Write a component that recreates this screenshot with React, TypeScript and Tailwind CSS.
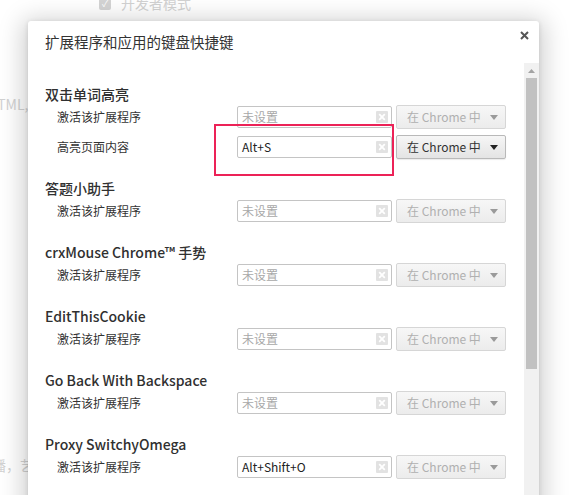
import React from "react";

type Row = { label: string; value?: string; active?: boolean };
type Section = { name: string; rows: Row[] };

const sections: Section[] = [
  {
    name: "双击单词高亮",
    rows: [
      { label: "激活该扩展程序" },
      { label: "高亮页面内容", value: "Alt+S", active: true },
    ],
  },
  { name: "答题小助手", rows: [{ label: "激活该扩展程序" }] },
  { name: "crxMouse Chrome™ 手势", rows: [{ label: "激活该扩展程序" }] },
  { name: "EditThisCookie", rows: [{ label: "激活该扩展程序" }] },
  { name: "Go Back With Backspace", rows: [{ label: "激活该扩展程序" }] },
  { name: "Proxy SwitchyOmega", rows: [{ label: "激活该扩展程序", value: "Alt+Shift+O" }] },
];

// little grey square with a white cross, inside the shortcut box
function ClearIcon() {
  return (
    <svg width="12" height="12" viewBox="0 0 12 12" className="shrink-0">
      <rect x="0" y="0" width="12" height="12" rx="1" fill="#e2e2e2" />
      <path d="M3.2 3.2 L8.8 8.8 M8.8 3.2 L3.2 8.8" stroke="#fff" strokeWidth="1.8" />
    </svg>
  );
}

function ShortcutRow({ label, value, active }: Row) {
  return (
    <div className="flex h-[30px] items-center pl-3">
      <div className="w-[180px] text-[12px] text-[#333]">{label}</div>
      <div className="flex h-[22px] w-[155px] items-center rounded-[2px] border border-[#c4c4c4] bg-white pl-[4px] pr-[3px]">
        <span className={"flex-1 text-[12px] leading-none " + (value ? "text-[#222]" : "text-[#a8a8a8]")}>
          {value ?? "未设置"}
        </span>
        <ClearIcon />
      </div>
      <div
        className={
          "ml-[4px] flex h-[24px] w-[110px] items-center rounded-[2px] border pl-[10px] pr-[7px] " +
          (active
            ? "border-[#b9b9b9] bg-gradient-to-b from-[#f6f6f6] to-[#e4e4e4] text-[#333] shadow-[0_1px_1px_rgba(0,0,0,0.08)]"
            : "border-[#d6d6d6] bg-gradient-to-b from-[#f7f7f7] to-[#ececec] text-[#b0b0b0]")
        }
      >
        <span className="flex-1 text-[12px] leading-none">在 Chrome 中</span>
        <svg width="8" height="5" viewBox="0 0 8 5">
          <path d="M0 0 H8 L4 5 Z" fill={active ? "#222" : "#9a9a9a"} />
        </svg>
      </div>
    </div>
  );
}

export default function App() {
  return (
    <div className="relative h-[495px] w-[573px] overflow-hidden bg-white font-['Noto_Sans_CJK_SC',sans-serif]">
      {/* faded page behind the dialog */}
      <div className="flex flex-col text-[13px] text-[#d2d2d2]">
        <div className="-mt-[7px] flex items-center gap-[10px] pl-[99px]">
          <span className="flex h-[12px] w-[12px] items-center justify-center rounded-[2px] bg-[#d4d4d4] text-[9px] leading-none text-white">
            ✓
          </span>
          <span className="text-[14px]">开发者模式</span>
        </div>
        <div className="mt-[80px] -ml-[13px] text-[14px]">HTML,</div>
        <div className="mt-[340px] -ml-[8px] text-[14px]">播，艺</div>
      </div>

      {/* the dialog */}
      <div className="absolute left-[28px] top-[21px] flex h-[520px] w-[511px] flex-col rounded-t-[3px] bg-white shadow-[0_4px_24px_6px_rgba(0,0,0,0.18),0_1px_5px_rgba(0,0,0,0.12)]">
        <div className="flex h-[42px] items-center pl-[17px] pr-[10px]">
          <h1 className="flex-1 text-[14.5px] font-normal text-[#333]">扩展程序和应用的键盘快捷键</h1>
          <svg width="9" height="9" viewBox="0 0 9 9" className="mt-[10px] self-start">
            <path d="M1 1 L8 8 M8 1 L1 8" stroke="#555" strokeWidth="2" />
          </svg>
        </div>

        <div className="flex flex-1">
          <div className="flex flex-1 flex-col pl-[17px] pt-[23px]">
            {sections.map((s) => (
              <div key={s.name} className="mb-[18px]">
                <h2 className="h-[16px] text-[14px] font-medium leading-4 text-[#303030]">{s.name}</h2>
                {s.rows.map((r) => (
                  <ShortcutRow key={r.label} {...r} />
                ))}
              </div>
            ))}
          </div>

          {/* scrollbar */}
          <div className="flex w-[15px] flex-col items-center bg-[#f1f1f1]">
            <svg width="7" height="4" viewBox="0 0 7 4" className="mt-[6px]">
              <path d="M0 4 H7 L3.5 0 Z" fill="#a3a3a3" />
            </svg>
            <div className="mt-[5px] h-[291px] w-[11px] bg-[#c1c1c1]" />
          </div>
        </div>
      </div>

      {/* red highlight drawn on the screenshot */}
      <div className="absolute left-[214px] top-[124px] h-[52px] w-[180px] border-2 border-[#ec2257]" />
    </div>
  );
}
